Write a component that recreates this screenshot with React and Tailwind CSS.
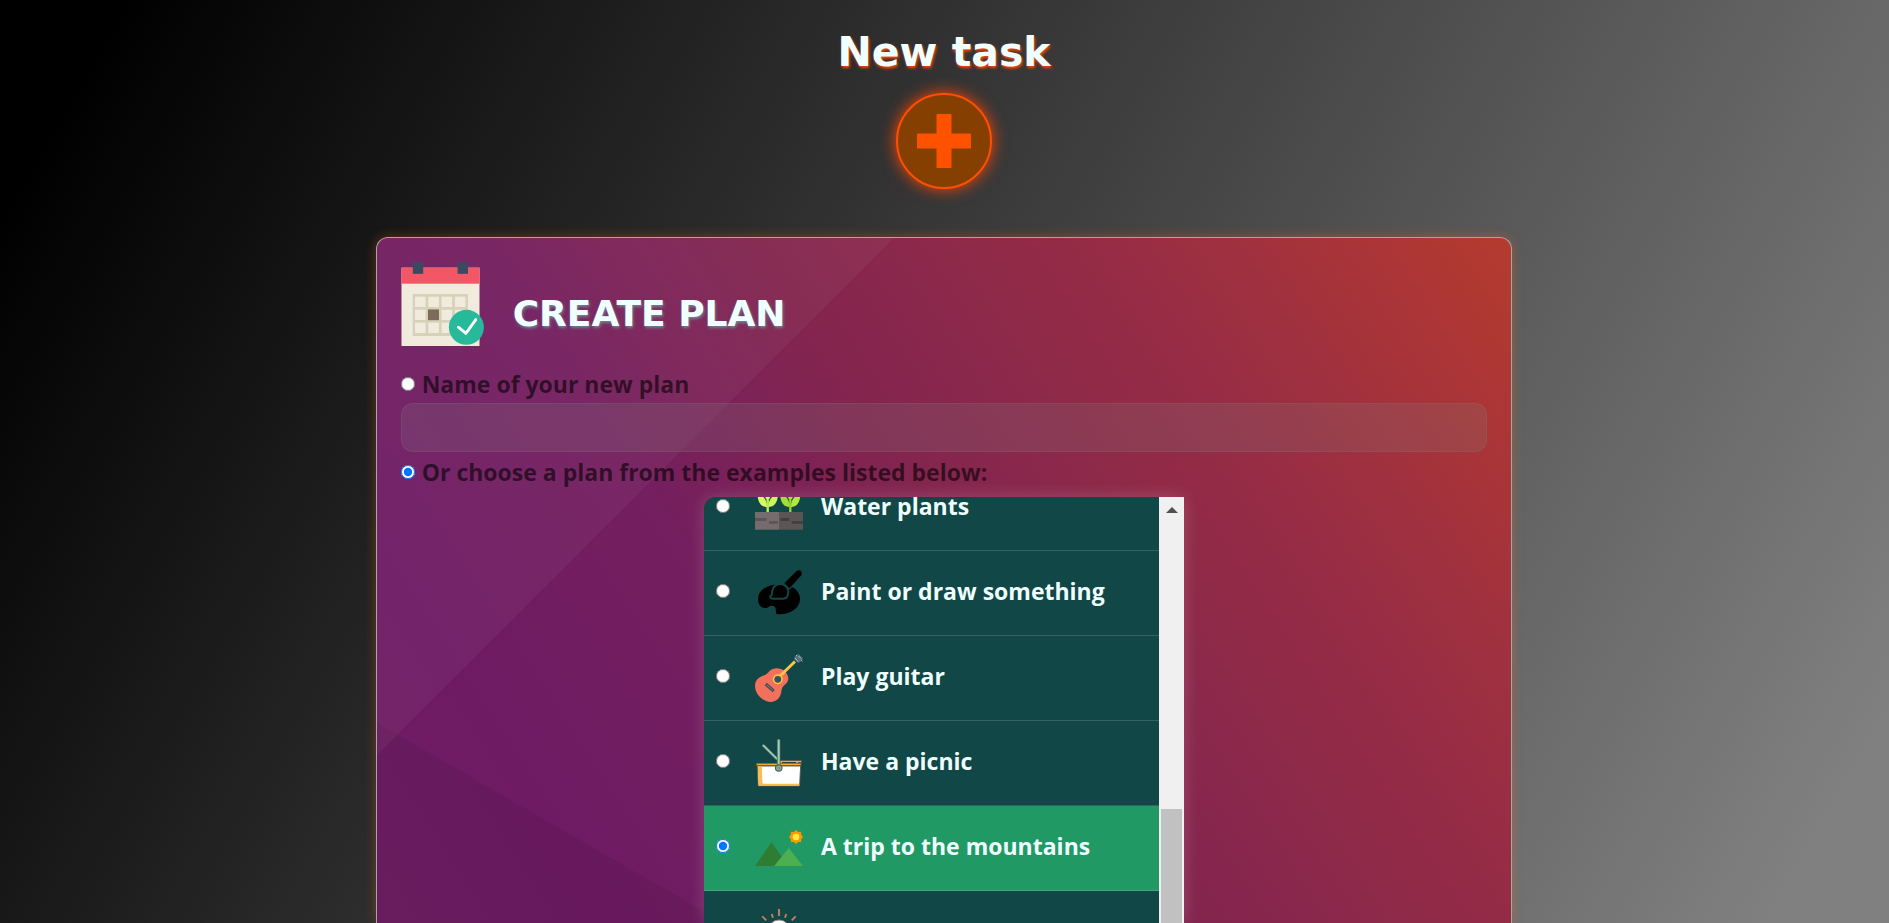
function CalendarIcon() {
  const cols = [14, 27.3, 40.6, 53.9];
  const rows = [34.7, 47.7, 60.7];
  return (
    <svg viewBox="0 0 84 84" className="size-[84px] shrink-0" aria-hidden="true">
      <rect x="0.5" y="5.7" width="78" height="78.3" fill="#f0ebdd" />
      <rect x="0.5" y="5.7" width="78" height="16" fill="#f35766" />
      <rect x="11.8" y="0" width="10.4" height="11.8" fill="#3b4a60" />
      <rect x="56.6" y="0" width="10.4" height="11.8" fill="#3b4a60" />
      <rect x="11.7" y="32" width="55.2" height="42" fill="#d6d1b9" />
      {rows.map((y) => cols.map((x) => <rect key={`${x}-${y}`} x={x} y={y} width="10.6" height="10.3" fill="#f0ebdd" />))}
      <rect x="27" y="47.4" width="11" height="10.8" fill="#7f6b5c" />
      <circle cx="65.4" cy="65.3" r="17.5" fill="#26b99a" />
      <path d="M57.3 65.2 64.9 71.4 74.8 57.6" fill="none" stroke="#fff" strokeWidth="2.8" strokeLinecap="round" strokeLinejoin="round" />
    </svg>
  );
}

function PlantsIcon() {
  return (
    <>
      <rect x="0" y="28" width="24" height="17.7" fill="#766c6d" />
      <rect x="24" y="28" width="24" height="17.7" fill="#5c5556" />
      <rect x="0" y="34" width="11.5" height="3" fill="#5c5556" />
      <rect x="14" y="37" width="8.8" height="2.8" fill="#5c5556" />
      <rect x="25.5" y="34" width="8.7" height="3" fill="#443e3f" />
      <rect x="36.7" y="37" width="11.3" height="2.8" fill="#443e3f" />
      <rect x="11.5" y="16" width="2.4" height="12" fill="#b9ec54" />
      <rect x="34.1" y="16" width="2.4" height="12" fill="#97cf2f" />
      <path d="M12 23C6 23 2.7 18 2.7 11 8 11 12 15 12 23Z" fill="#d8f968" />
      <path d="M13.4 23c6 0 9.4-5 9.4-12-5.3 0-9.4 4-9.4 12Z" fill="#d0f45c" />
      <path d="M12.7 3c4 4 5 8 0 14-5-6-4-10 0-14Z" fill="#d8f968" />
      <path d="M34.6 23c-6 0-9.3-5-9.3-12 5.3 0 9.3 4 9.3 12Z" fill="#a3dc3c" />
      <path d="M36 23c6 0 9.2-5 9.2-12C40 11 36 15 36 23Z" fill="#b7e546" />
      <path d="M35.3 3c4 4 5 8 0 14-5-6-4-10 0-14Z" fill="#a3dc3c" />
    </>
  );
}

function PaletteIcon() {
  return (
    <>
      <path d="M19 15.7C9 17 3 23 3 30c0 5.500 3 9 7 9s4-2.500 7-2.300c4 .3 4 3.300 4 7.300 0 1 1 1.200 4 1.200 11 0 20-6.500 20-15.200 0-4.500-2.200-8-6-11L30 15.500Z" />
      <path d="M25.5 16c3.500 0 6.700 3 6.700 7 0 3.300-1.200 5.700-4.200 5.700H17.500c-1.500 0-1.700-1-.5-1.700 1.500-1 .5-3 1.500-6 1-3 3.500-5 7-5Z" stroke="#114746" strokeWidth="4" strokeLinejoin="round" />
      <path d="M25.5 16c3.500 0 6.700 3 6.700 7 0 3.300-1.200 5.700-4.200 5.700H17.500c-1.500 0-1.700-1-.5-1.700 1.500-1 .5-3 1.500-6 1-3 3.500-5 7-5Z" />
      <path d="M41.5 1.700c3-2.200 7 1.300 5 4.600L36 18.300 34.200 20 28.800 14.200Z" stroke="#114746" strokeWidth="1.500" />
      <path d="M41.7 2c2.800-2 6.500 1 4.600 4.200L36 17.500 34.200 19 29.600 14Z" />
    </>
  );
}

function GuitarIcon() {
  return (
    <>
      <path d="M0 32c0-6 4-9 8.500-10.500 3-1 4-2 6-4.500 4-4 11-3.500 15 0 4 3.800 5 8.500 2.300 11.700-2.300 2.600-4.800 3.800-5.300 7.800C26 43 22 48 15.500 48 8.500 48 0 40.500 0 32Z" fill="#f3705b" />
      <circle cx="22.8" cy="25.3" r="5" fill="#f8c546" />
      <path d="M24.500 22.500 40 7.500" stroke="#f8c546" strokeWidth="3" />
      <circle cx="22.8" cy="25.3" r="3.4" fill="#36505c" />
      <path d="m10.700 30 8 7" stroke="#36505c" strokeWidth="3" />
      <path d="m11.500 30.700 6.500 5.600" stroke="#d98f80" strokeWidth=".6" />
      <path d="M43.500 0 48 4.300 46.500 7 43.200 9 39 5l1-3Z" fill="#54707e" />
      <path d="m41 1 1 1m4 4 1.500 1.200M40 4l3 3.500M43.500 2l2.500 2.500" stroke="#b9c8cf" strokeWidth=".9" />
    </>
  );
}

function PicnicIcon() {
  return (
    <>
      <path d="M24 21.500h22.500v2H43.500l-.5 2.500H24Z" fill="#f3ac37" stroke="#5b554c" strokeWidth=".8" />
      <path d="M27 23.500h14" stroke="#114746" strokeWidth="1" />
      <path d="M1.500 24.300h44.500v2.400H1.500Z" fill="#f3ac37" stroke="#5b554c" strokeWidth=".8" />
      <path d="m2.300 27 .9 20h41.400l1-20Z" fill="#fff" stroke="#5b554c" strokeWidth=".9" />
      <path d="M2.800 27.200 3.600 46.500H44.300l.1-1.800H8.800c-1 0-1.300-.6-1.400-2L6.800 27.200Z" fill="#f9bd4e" />
      <path d="m8.500 6.700 13.200 13" stroke="#565b59" strokeWidth="3.2" strokeLinecap="round" />
      <path d="m8.500 6.700 13.200 13" stroke="#93d5bc" strokeWidth="1.700" strokeLinecap="round" />
      <path d="M23.700 1.500V28" stroke="#565b59" strokeWidth="3.600" strokeLinecap="round" />
      <path d="M23.700 1.500V28" stroke="#93d5bc" strokeWidth="2" strokeLinecap="round" />
      <circle cx="23.700" cy="29" r="3.200" fill="#7fb8a4" stroke="#565b59" strokeWidth="1.200" />
      <circle cx="23.700" cy="29" r="1.100" fill="#d9b36a" stroke="#565b59" strokeWidth=".5" />
    </>
  );
}

function MountainsIcon() {
  return (
    <>
      <path d="M0 42 16.500 18.200 33 42Z" fill="#2e7d32" />
      <path d="M19.200 42 33.700 24 48 42Z" fill="#4caf50" />
      <path d="m41 6 2.200 1.900 2.800-.1.200 2.900L48 13l-1.800 2.200-.2 2.900-2.800-.1L41 20l-2.200-2-2.800.1-.2-2.900L34 13l1.800-2.300.2-2.900 2.800.1Z" fill="#ff9800" />
      <circle cx="41" cy="13" r="3.300" fill="#ffeb3b" />
    </>
  );
}

function BulbIcon() {
  return (
    <>
      <path d="M24 0v7M16.700 5l1.300 3.700M31.300 5 30 8.700M7.300 7.300l4 4M40.700 7.300l-4 4" stroke="#c98252" strokeWidth="1.900" />
      <circle cx="24" cy="22" r="11" fill="#fff" stroke="#8a8f8f" strokeWidth="1" />
      <path d="M20 33h8v8h-8Z" fill="#8a8f8f" />
    </>
  );
}

const plans = [
  { id: "water", label: "Water plants", Icon: PlantsIcon },
  { id: "paint", label: "Paint or draw something", Icon: PaletteIcon },
  { id: "guitar", label: "Play guitar", Icon: GuitarIcon },
  { id: "picnic", label: "Have a picnic", Icon: PicnicIcon },
  { id: "mountains", label: "A trip to the mountains", Icon: MountainsIcon },
  { id: "idea", name: "Idea", Icon: BulbIcon },
];

function PlanRow({ id, label, name, Icon }) {
  return (
    <li className="border-b border-white/15 has-checked:bg-[#209965]">
      <label htmlFor={id} className="flex h-[84px] items-center pl-3">
        <input id={id} type="radio" name="example" aria-label={name} defaultChecked={id === "mountains"} className="mr-[25px] mb-1 size-3.5 shrink-0" />
        <svg viewBox="0 0 48 48" className="mr-[18px] size-12 shrink-0" aria-hidden="true">
          <Icon />
        </svg>
        {label && <span className="mb-1 text-[23px] leading-8 font-bold text-[#f0ffff]">{label}</span>}
      </label>
    </li>
  );
}

export default function App() {
  return (
    <main className="flex h-screen flex-col items-center overflow-hidden bg-[linear-gradient(120deg,#000_5%,#808080_95%)] pt-7 pr-px font-['Open_Sans',sans-serif]">
      <h1 className="font-['DejaVu_Sans',sans-serif] text-[41px] leading-12 font-bold text-[#f0ffff] [text-shadow:1px_2px_3px_#ff4500]">New task</h1>
      <button
        type="button"
        aria-label="Add task"
        className="mt-[17px] grid size-24 shrink-0 place-items-center rounded-full border-2 border-[#ff5000] bg-[#853f00] shadow-[0_0_16px_#ff4500]"
      >
        <svg viewBox="0 0 54 54" className="size-[54px]" aria-hidden="true">
          <path d="M20.500 0h13a1 1 0 0 1 1 1v18.500H53a1 1 0 0 1 1 1v13a1 1 0 0 1-1 1H34.500V53a1 1 0 0 1-1 1h-13a1 1 0 0 1-1-1V34.500H1a1 1 0 0 1-1-1v-13a1 1 0 0 1 1-1h18.500V1a1 1 0 0 1 1-1Z" fill="#ff5200" />
        </svg>
      </button>

      <form className="mt-12 box-content flex min-h-0 w-[60.1%] flex-1 flex-col rounded-t-xl border border-b-0 border-[#aaa6a2] bg-[linear-gradient(135deg,rgba(255,255,255,0.035)_365px,transparent_366px),linear-gradient(210deg,transparent_85%,rgba(0,0,0,0.06)_85.1%),linear-gradient(57deg,#701e64_0%,#6e1b64_15%,#741f5e_35%,#83254f_52%,#982d44_76%,#ac3636_92%,#b53b2e_100%)] shadow-[0_0_12px_rgba(255,110,20,0.32)]">
        <div className="flex min-h-0 flex-1 flex-col px-6 pt-6">
          <header className="mb-[21px] flex items-end gap-7">
            <CalendarIcon />
            <h2 className="pb-3 font-['DejaVu_Sans',sans-serif] text-[36px] leading-10 font-bold text-[#f0ffff] [text-shadow:1px_2px_3px_#708090]">CREATE PLAN</h2>
          </header>

          <label className="flex items-center gap-[7px] pt-px text-[23px] leading-8 font-bold text-black/60">
            <input type="radio" name="source" className="size-3.5" />
            Name of your new plan
          </label>
          <input
            type="text"
            aria-label="Name of your new plan"
            className="mt-[3px] h-[49px] w-full shrink-0 rounded-xl border border-[rgba(128,128,128,0.2)] bg-[rgba(128,128,128,0.2)] px-3 text-[23px] text-white"
          />
          <label className="mt-1 flex items-center gap-[7px] text-[23px] leading-8 font-bold text-black/60">
            <input type="radio" name="source" defaultChecked className="size-3.5" />
            Or choose a plan from the examples listed below:
          </label>

          <div className="mt-[9px] flex min-h-0 w-full max-w-[480px] flex-1 self-center rounded-tl-xl shadow-[0_0_16px_rgba(255,255,255,0.18)]">
            <div className="flex-1 overflow-hidden rounded-tl-xl bg-[#114746]">
              <ul className="-mt-[31px]">
                {plans.map((p) => (
                  <PlanRow key={p.id} {...p} />
                ))}
              </ul>
            </div>
            <div className="flex w-[25px] flex-col items-center bg-[#f0f0f0] px-0.5 pt-2.5" aria-hidden="true">
              <svg viewBox="0 0 12 6" className="h-1.5 w-3 shrink-0">
                <path d="M6 0 12 6H0Z" fill="#505050" />
              </svg>
              <div className="mt-[296px] w-full flex-1 bg-[#c1c1c1]" />
            </div>
          </div>
        </div>
      </form>
    </main>
  );
}
